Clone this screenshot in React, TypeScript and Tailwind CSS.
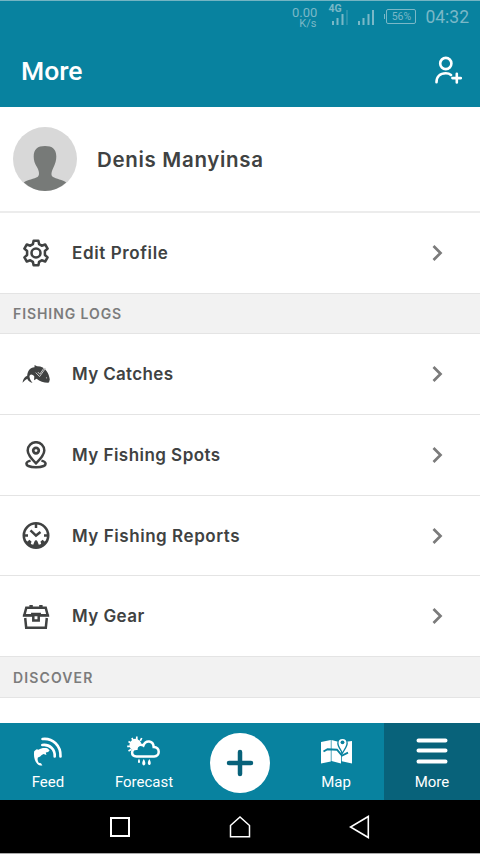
import React from "react";

const BODY = "font-['Inter','Liberation_Sans',sans-serif]";
const ROBOTO = "font-['Roboto','Liberation_Sans',sans-serif]";

function GearIcon() {
  return (
    <svg width="28" height="28" viewBox="0 0 28 28" fill="none" stroke="#404242" strokeWidth="2.5" strokeLinejoin="round">
      <path d="M11.6 1.7h4.8l.7 3.5 2.6 1.5 3.5-1.2 2.4 4.1-2.7 2.4v4l2.7 2.4-2.4 4.1-3.5-1.2-2.6 1.5-.7 3.5h-4.8l-.7-3.5-2.6-1.5-3.5 1.2-2.4-4.1L5.1 16v-4L2.4 9.6l2.4-4.1 3.5 1.2 2.6-1.5z" />
      <circle cx="14" cy="14" r="4.5" />
    </svg>
  );
}

function FishIcon() {
  return (
    <svg width="28" height="28" viewBox="0 0 28 28">
      <path d="M.5 22.800c.5-3.800 2.100-6.200 4.700-7C5.500 10.800 8 7.700 12.500 7.200L12.600 5l2.400 1.300c4.200-.1 7.500 1.800 9.700 4.900 1.600 2.300 2.700 5.100 3.100 8.400l-.8 3c-4.400.3-9.100-1.200-12.400-3.900L12 20.200l.3-3.700c-.9-1.200-2-1.900-3.100-1.900-1.100.1-1.700 1-1.700 2.200.2 2 1.200 3.900 3 6.200-2.800-.8-4.400-2.300-5.200-4.300-1.500.7-2.900 2.100-4.800 4.100z" fill="#404242" />
      <path d="m13.700 12.600 3.900 4 6.100-8.600M15.800 12l2 2.200 4.200-6.200" fill="none" stroke="#d5d5d5" strokeWidth=".9" />
      <circle cx="24.500" cy="17.800" r=".6" fill="#ccc" />
    </svg>
  );
}

function SpotIcon() {
  return (
    <svg width="28" height="28" viewBox="0 0 28 28" fill="none" stroke="#404242" strokeWidth="2.500">
      <path d="M14 22.300C9.300 17.700 5.700 13.700 5.700 9.500a8.300 8.300 0 0 1 16.600 0c0 4.200-3.600 8.200-8.300 12.800z" />
      <circle cx="14" cy="9.600" r="2.800" strokeWidth="2.700" />
      <path d="M8.600 19.600C6 20.200 4.400 21.200 4.400 22.700c0 2.200 4.200 3.500 9.600 3.500s9.600-1.300 9.600-3.500c0-1.500-1.600-2.500-4.200-3.100" />
    </svg>
  );
}

function ClockIcon() {
  return (
    <svg width="28" height="28" viewBox="0 0 28 28">
      <circle cx="14" cy="13.500" r="12.200" fill="none" stroke="#404242" strokeWidth="2.600" />
      <path d="M3 18.300l2.600 1.200 1.700-1.700 2.200 1.800-.7 2.500 2.400.6 1.500-3.700 1.300-.9 1.300.9 1.500 3.700 2.400-.6-.7-2.500 2.200-1.800 1.700 1.700 2.600-1.200-2.800 5L18 25.500h-8l-4.500-2.500z" fill="#404242" />
      <path d="M14 2v4M2 13.500h4M22 13.500h4M8.500 8.400l5.500 5.200 4.500-3.500" fill="none" stroke="#404242" strokeWidth="2.500" />
    </svg>
  );
}

function ChestIcon() {
  return (
    <svg width="28" height="28" viewBox="0 0 28 28" fill="none" stroke="#404242" strokeWidth="2.500">
      <path d="M4.300 5.800h19.400l2 7.500H2.300zM3.200 16l1 9.800h19.600l1-9.800" />
      <path d="M.9 13.500h26.200" strokeWidth="2.200" />
      <path d="M7.400 4.200h3.400M17.200 4.200h3.400" strokeWidth="2.400" />
      <path d="M10.300 13.300V12h7.400v1.300" />
      <path d="M11.300 13h5.400v5.600h-5.400z" fill="#fff" strokeWidth="2.500" />
    </svg>
  );
}

function Row({ icon, label, size, tracking }: { icon: React.ReactNode; label: string; size: string; tracking: string }) {
  return (
    <div className={`flex shrink-0 items-center border-b border-[#e4e4e4] pl-[22px] pr-[35px] ${size}`}>
      <span className="w-[50px] shrink-0">{icon}</span>
      <span className={`flex-1 whitespace-nowrap pt-[2px] ${tracking}`}>{label}</span>
      <svg width="16" height="18" viewBox="0 0 16 18" fill="none" stroke="#7b7b7b" strokeWidth="2.700">
        <path d="m4.500 2 7 7-7 7" />
      </svg>
    </div>
  );
}

function Section({ label, size, tracking }: { label: string; size: string; tracking: string }) {
  return (
    <div className={`flex shrink-0 items-center border-b border-[#e4e4e4] bg-[#f2f2f2] pl-[13px] text-[14px] font-semibold text-[#7c7c7c] ${size} ${tracking}`}>
      {label}
    </div>
  );
}

function Bars({ dim }: { dim?: boolean }) {
  return (
    <svg width="17" height="15" viewBox="0 0 17 15" fill="#7ab8c7">
      <path d="M0 11h2v4H0zM4.500 8h2v7h-2zM9.500 4h2v11h-2z" />
      <path d="M14 0h2v15h-2z" opacity={dim ? 0.3 : 1} />
    </svg>
  );
}

function FeedIcon() {
  return (
    <svg width="32" height="32" viewBox="0 0 32 32" fill="none">
      <path d="M10.500 3c10.300-1.200 18.500 6.700 18 17.500M10.300 9c7.500-1 12.900 4.500 12.400 11.500" stroke="#fff" strokeWidth="2.600" strokeLinecap="round" />
      <path d="M2.200 15.300c1-.4 1.200-1.700 2.600-2l1.800.4c2.200-1.600 5.800-2.200 9.200-1.300l1.800 2-1.500 1.600-2.300.5.600 2.500-2.800-1c-1.300.5-2.500 1.500-3.400 2.600l-2.300.9c-.7 1.900-.2 3.800.8 5.300l2.300.5 1.400 2.100c-2.100.2-3.700-.3-5-1.500C2.300 24.800 1.500 19.500 2.200 15.300z" fill="#fff" />
    </svg>
  );
}

function ForecastIcon() {
  return (
    <svg width="34" height="32" viewBox="0 0 34 32">
      <path d="M9.800.6v3.400M4.900 2l1.500 2.900M1.500 5.500l3 1.900M.2 10.400h3.500M1.500 15l3-1.700M14.700 2l-1.400 2.900" stroke="#fff" strokeWidth="1.700" />
      <path d="M4.700 13.500a6 6 0 1 1 9.500-6.500l-2 4z" fill="#fff" />
      <path d="M9.500 20.500c-6-.4-5.700-7.700-.1-7.700.2-4 4.400-5.100 7-3.200C18.800 3.400 26.300 4.600 26.700 11.100c6.600.5 6.600 9 .5 9.400z" fill="#08829f" stroke="#fff" strokeWidth="2.500" />
      <path d="M12 22.500c3.500 6-3.500 6 0 0zM16.800 23c5.400 8.500-5.400 8.500 0 0zM22.300 23c5 8-5 8 0 0z" fill="#fff" />
    </svg>
  );
}

function MapIcon() {
  return (
    <svg width="32" height="32" viewBox="0 0 32 32">
      <path d="m1 6 9.800-2v21.500L1 27.500zM11.500 4l9.500 2.500v21L11.500 25zM21.800 6.300 32 5v22.500l-10.200-2.300z" fill="#fff" />
      <path d="m3.500 15.500 4-2.300 9.500.5 5 5.800 6-2.800" fill="none" stroke="#08829f" strokeWidth="1.900" />
      <path d="M22.500 18.500c-2.300-4.900-5.300-7.700-5.300-11.300a5.300 5.300 0 0 1 10.600 0c0 3.600-3 6.400-5.300 11.300z" fill="#08829f" />
      <path d="M22.500 16c-1.700-4-4-6.200-4-9.100a4 4 0 0 1 8 0c0 2.900-2.300 5.100-4 9.100z" fill="#fff" />
      <circle cx="22.500" cy="6.300" r="1.900" fill="#08829f" />
    </svg>
  );
}

function Tab({ label, icon, active }: { label: string; icon: React.ReactNode; active?: boolean }) {
  return (
    <div className={`flex h-full w-24 flex-col items-center pt-[13px] text-[15px] leading-[18px] text-white ${active ? "bg-[#08627a]" : ""}`}>
      <span className="flex h-[32px] items-center">{icon}</span>
      <span className="mt-[5px]">{label}</span>
    </div>
  );
}

export default function App() {
  return (
    <div className={`flex h-[854px] w-[480px] flex-col overflow-hidden bg-white text-[#404242] ${BODY}`}>
      <header className={`h-[107px] shrink-0 border-t border-[#73b4c3] bg-[#08829f] ${ROBOTO}`}>
        <div className="flex h-[33px] justify-end pr-[11px] text-[#7ab8c7]">
          <div className="mt-[5px] flex flex-col items-end">
            <span className="text-[13px] leading-[13px]">0.00</span>
            <span className="mr-px text-[11px] leading-[10px]">K/s</span>
          </div>
          <div className="relative ml-[15px] mt-[9px] w-[17px]">
            <span className="absolute -left-[4px] -top-[7px] text-[10.500px] font-bold leading-[12px]">4G</span>
            <Bars dim />
          </div>
          <div className="ml-[9px] mt-[9px]"><Bars /></div>
          <div className="ml-[9px] mt-[8px] flex h-[15px] items-center">
            <i className="h-[5px] w-px bg-[#7ab8c7]" />
            <span className="ml-px flex h-[15px] w-[30px] items-center justify-center rounded-[2px] border border-[#7ab8c7] text-[10.500px]">56%</span>
          </div>
          <span className="ml-[9px] mt-[6px] text-[17.500px] leading-[20px]">04:32</span>
        </div>
        <div className="flex h-[73px] items-center justify-between pl-[21px] pr-[18px]">
          <h1 className="text-[26.500px] font-medium leading-[30px] text-white">More</h1>
          <svg width="29" height="29" viewBox="0 0 29 29" fill="none" stroke="#fff" strokeWidth="2.600" strokeLinecap="round">
            <circle cx="12.800" cy="7.500" r="5.600" />
            <path d="M3.500 26.300c0-5.700 3.500-9 9.300-9 2.300 0 4 .7 5.200 1.700M23.800 17.800v8.700M19.400 22.100h8.400" />
          </svg>
        </div>
      </header>
      <main className="flex h-[616px] shrink-0 flex-col overflow-hidden text-[17px] font-semibold">
        <div className="flex h-[106px] shrink-0 items-center border-b-2 border-[#ececec] pl-[13px]">
          <svg width="64" height="64" viewBox="0 0 64 64">
            <circle cx="32" cy="32" r="32" fill="#d8d8d8" />
            <path d="M10.800 55.500c3-2.500 11-4 13.700-5.500 2.500-2 1.500-5.500 0-9C21.500 36.500 20.700 33 20.700 29.500c0-7.500 4-10.500 11.300-10.500s11.300 3 11.300 10.500c0 3.500-.8 7-3.300 12-1.500 3.500-2.500 7 0 8.500 2.500 1.500 10.200 3 13.200 5.500A32 32 0 0 1 32 64a32 32 0 0 1-21.200-8.500z" fill="#777a78" />
          </svg>
          <span className="ml-5 pt-[2px] text-[20.500px] tracking-[0.680px]">Denis Manyinsa</span>
        </div>
        <Row icon={<GearIcon />} label="Edit Profile" size="h-[81px]" tracking="tracking-[0.620px]" />
        <Section label="FISHING LOGS" size="h-[40px]" tracking="tracking-[0.920px]" />
        <Row icon={<FishIcon />} label="My Catches" size="h-[81px]" tracking="tracking-[0.340px]" />
        <Row icon={<SpotIcon />} label="My Fishing Spots" size="h-[81px]" tracking="tracking-[0.460px]" />
        <Row icon={<ClockIcon />} label="My Fishing Reports" size="h-[80px]" tracking="tracking-[0.550px]" />
        <Row icon={<ChestIcon />} label="My Gear" size="h-[81px]" tracking="tracking-[0.430px]" />
        <Section label="DISCOVER" size="h-[41px]" tracking="tracking-[1.120px]" />
      </main>
      <nav className={`flex h-[77px] shrink-0 bg-[#08829f] ${ROBOTO}`}>
        <Tab label="Feed" icon={<FeedIcon />} />
        <Tab label="Forecast" icon={<ForecastIcon />} />
        <div className="flex w-24 items-center justify-center pt-[3px]">
          <svg width="60" height="60" viewBox="0 0 60 60">
            <circle cx="30" cy="30" r="30" fill="#fff" />
            <path d="M30 19v22M19 30h22" stroke="#08627a" strokeWidth="4.500" strokeLinecap="round" />
          </svg>
        </div>
        <Tab label="Map" icon={<MapIcon />} />
        <Tab label="More" active icon={
          <svg width="32" height="32" viewBox="0 0 32 32" stroke="#fff" strokeWidth="4" strokeLinecap="round">
            <path d="M2.500 4.500h27M2.500 14.500h27M2.500 25.500h27" />
          </svg>
        } />
      </nav>
      <footer className="flex h-[54px] shrink-0 items-center justify-center gap-[98px] border-b border-[#aaa] bg-black">
        <svg width="22" height="24" viewBox="0 0 22 24" fill="none" stroke="#fff" strokeWidth="2"><path d="M2 3h18v18H2z" /></svg>
        <svg width="22" height="24" viewBox="0 0 22 24" fill="none" stroke="#fff" strokeWidth="1.500"><path d="M1.500 10.500 11 2l9.500 8.500v11.200h-19z" /></svg>
        <svg width="22" height="24" viewBox="0 0 22 24" fill="none" stroke="#fff" strokeWidth="1.600"><path d="M19.300 1.500v21L1.500 12z" /></svg>
      </footer>
    </div>
  );
}
